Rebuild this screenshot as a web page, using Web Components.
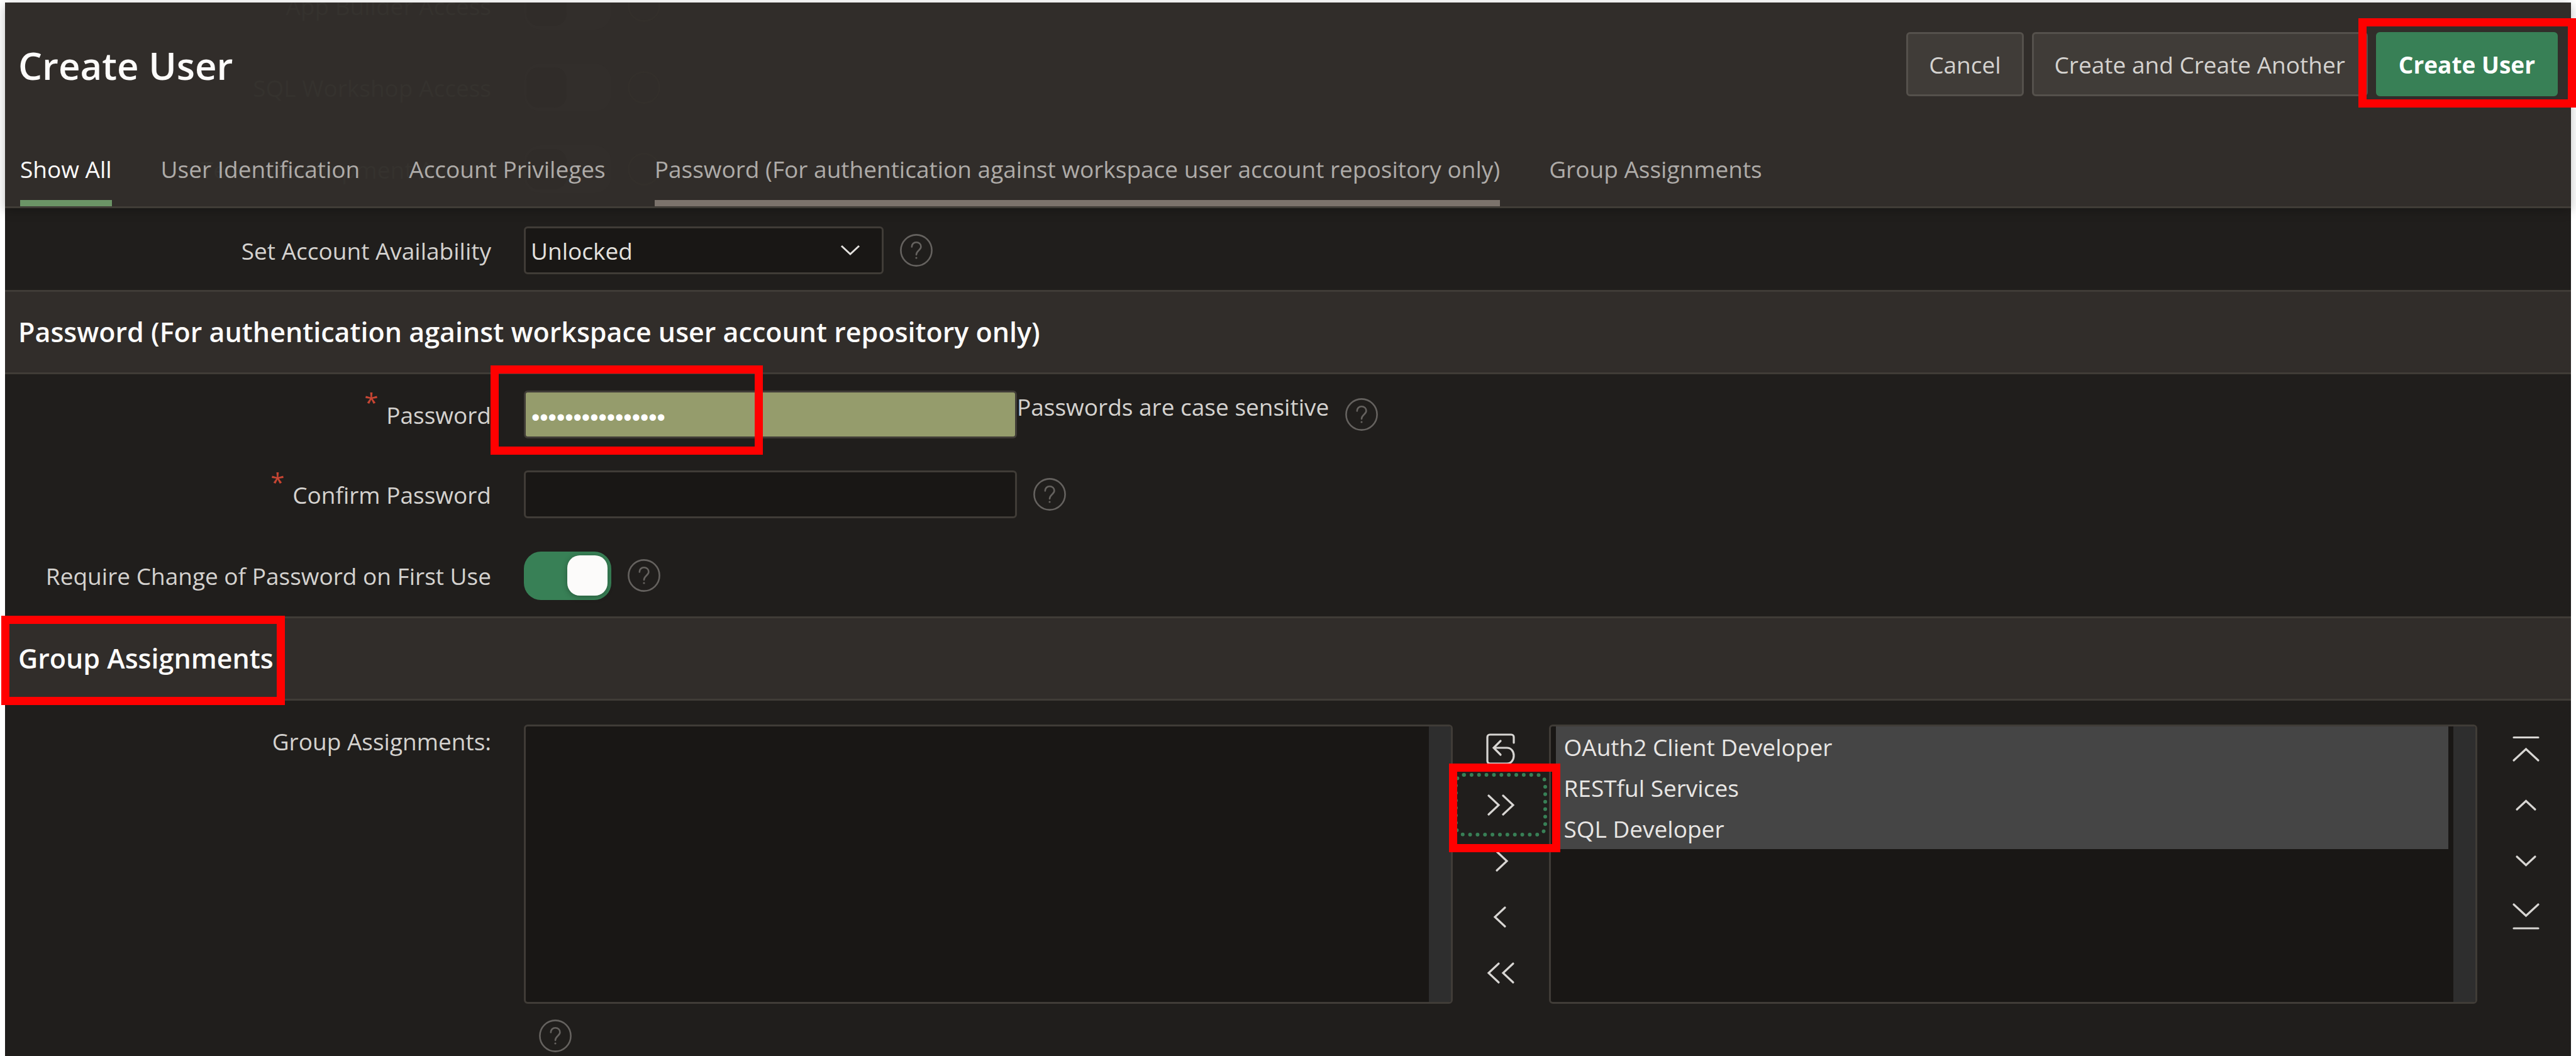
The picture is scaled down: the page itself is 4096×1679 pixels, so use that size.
<!DOCTYPE html>
<html lang="en">
<head>
<meta charset="utf-8">
<title>Create User</title>
<style>
  :root {
    --bar: #312d2a;
    --page: #201e1c;
    --well: #191715;
    --line: #403c37;
    --text: #d4d2cf;
    --bright: #fcfbfa;
    --accent: #388056;
    --size: 37px;
  }
  body {
    margin: 0;
    background: #fff;
    font-family: "Open Sans", "Noto Sans", sans-serif;
    font-size: var(--size);
    color: var(--text);
  }
</style>
</head>
<body>
<user-page></user-page>

<script>
const RESET = `*{box-sizing:border-box} button,input,select{font:inherit;color:inherit;margin:0}`;

class BaseElement extends HTMLElement {
  connectedCallback() {
    if (this.shadowRoot) return;
    const root = this.attachShadow({ mode: 'open' });
    root.innerHTML = `<style>${RESET}${this.styles()}</style>${this.markup()}`;
  }
  attr(name) { return this.getAttribute(name) || ''; }
  styles() { return ''; }
  markup() { return '<slot></slot>'; }
}

/* Red call-out frame laid over the element that contains it. */
class MarkFrame extends BaseElement {
  styles() {
    return `:host{display:block;position:absolute;z-index:5;border:13px solid #f00;pointer-events:none}`;
  }
  markup() { return ''; }
}

class HelpButton extends BaseElement {
  styles() {
    return `
      :host{display:block;flex:none;color:#65625f}
      button{display:block;width:52px;height:52px;padding:0;border:0;background:none}
      svg{display:block}`;
  }
  markup() {
    return `<button type="button" aria-label="Help"><svg width="52" height="52" viewBox="0 0 52 52" fill="none" stroke="currentColor" stroke-width="2.6" stroke-linecap="round">
      <circle cx="26" cy="26" r="24.6"/>
      <path d="M18.8 20.4c0-4.2 3-7.2 7.2-7.2s7.4 2.9 7.4 7c0 5.6-7.4 6-7.4 12.8"/>
      <circle cx="26" cy="38" r="1.6" fill="currentColor" stroke="none"/></svg></button>`;
  }
}

class ActionButton extends BaseElement {
  styles() {
    return `
      :host{display:block;position:relative}
      button{display:block;height:102px;padding:0 33px;border:3px solid #55514c;border-radius:6px;background:#403c38;white-space:nowrap}
      :host([primary]) button{background:var(--accent);border-color:var(--accent);color:#fff;font-weight:700}`;
  }
  markup() { return `<button type="button"><slot></slot></button><slot name="mark"></slot>`; }
}

class NavTabs extends BaseElement {
  styles() {
    return `
      :host{display:block}
      nav{display:flex;gap:78px}
      a{display:block;line-height:50px;padding-bottom:24px;border-bottom:10px solid transparent;color:#aeaba8;text-decoration:none;white-space:nowrap}
      a.current{color:var(--bright);border-color:#6b9466}
      a.near{border-color:#7c736c}`;
  }
  markup() {
    return `<nav>
      <a class="current" href="#all">Show All</a>
      <a href="#identification">User Identification</a>
      <a href="#privileges">Account Privileges</a>
      <a class="near" href="#password">Password (For authentication against workspace user account repository only)</a>
      <a href="#groups">Group Assignments</a></nav>`;
  }
}

/* Rows that have scrolled under the sticky header and show faintly through it. */
class ScrolledRows extends BaseElement {
  styles() {
    return `
      :host{position:absolute;inset:0;overflow:hidden;color:#35322e;z-index:0}
      .rows{display:grid;gap:54px;margin-top:-33px}
      .row{display:flex;align-items:center;height:76px}
      .name{width:773px;text-align:right;margin-right:52px}
      .track{display:flex;align-items:center;width:139px;height:76px;border-radius:26px;background:#322e2b;margin-right:26px;padding:0 4px}
      .knob{width:64px;height:64px;border-radius:20px;background:#302c29}
      .ring{width:52px;height:52px;border:3px solid #332f2b;border-radius:50%}`;
  }
  markup() {
    const row = t => `<div class="row"><span class="name">${t}</span><span class="track"><span class="knob"></span></span><span class="ring"></span></div>`;
    return `<div class="rows" aria-hidden="true">${['App Builder Access', 'SQL Workshop Access', 'Team Development Access'].map(row).join('')}</div>`;
  }
}

class PageHeader extends BaseElement {
  styles() {
    return `
      :host{display:block;position:relative;z-index:2;background:var(--bar);border-bottom:3px solid var(--line);box-shadow:0 4px 16px rgba(0,0,0,.25);padding:47px 21px 0 24px}
      .top{display:flex;justify-content:space-between;align-items:center;margin-bottom:91px;margin-left:-3px;position:relative}
      h1{margin:0;padding-top:4px;font-size:60px;line-height:70px;font-weight:600;color:var(--bright)}
      .actions{display:flex;gap:13px}
      nav-tabs{position:relative}
      mark-frame{inset:-22px -29px -18px -28px}`;
  }
  markup() {
    return `<scrolled-rows></scrolled-rows>
      <div class="top"><h1>Create User</h1>
        <div class="actions">
          <action-button>Cancel</action-button>
          <action-button>Create and Create Another</action-button>
          <action-button primary>Create User<mark-frame slot="mark"></mark-frame></action-button>
        </div></div>
      <nav-tabs></nav-tabs>`;
  }
}

class SectionTitle extends BaseElement {
  styles() {
    return `
      :host{display:flex;align-items:center;position:relative;height:134px;padding:0 21px;background:var(--bar);border:solid var(--line);border-width:3px 0;box-sizing:border-box}
      h2{margin:0;font-size:43px;line-height:60px;font-weight:600;color:var(--bright)}`;
  }
  markup() { return `<h2><slot></slot></h2><slot name="mark"></slot>`; }
}

const FIELD = `
  :host{display:flex;align-items:center;min-height:76px}
  .label{display:flex;justify-content:flex-end;align-items:center;flex:none;width:773px;min-height:76px;margin-right:52px;white-space:nowrap}
  .label i{align-self:flex-start;font-style:normal;font-size:40px;line-height:38px;color:#c74634;margin-right:13px}
  help-button{margin-left:26px}`;

class SelectField extends BaseElement {
  styles() {
    return FIELD + `
      .box{display:grid;width:572px;height:76px}
      select,svg{grid-area:1/1}
      select{appearance:none;padding:0 8px;border:3px solid var(--line);border-radius:6px;background:var(--well);color:#e3e1de}
      svg{justify-self:end;align-self:center;margin-right:37px;pointer-events:none}`;
  }
  markup() {
    return `<label class="label" for="f">${this.attr('label')}</label>
      <div class="box"><select id="f"><option>Unlocked</option><option>Locked</option></select>
      <svg width="32" height="20" viewBox="0 0 32 20" fill="none" stroke="#e3e1de" stroke-width="3"><path d="M2 3l14 13L30 3"/></svg></div>
      <help-button></help-button>`;
  }
}

class PasswordField extends BaseElement {
  styles() {
    return FIELD + `
      .box{position:relative;width:784px;height:76px}
      input{display:block;width:100%;height:76px;padding:10px 9px 0;border:3px solid var(--line);border-radius:6px;background:var(--well);color:#fff;font:38px "Liberation Sans",sans-serif;outline:0}
      :host([filled]) input{background:#959c6c}
      .note{align-self:flex-start;line-height:52px;white-space:nowrap}`;
  }
  markup() {
    const note = this.attr('note');
    return `<label class="label" for="f"><i>*</i>${this.attr('label')}</label>
      <div class="box"><input id="f" type="password" required value="${this.attr('value')}"><slot></slot></div>
      ${note ? `<span class="note">${note}</span>` : ''}<help-button></help-button>`;
  }
}

class SwitchField extends BaseElement {
  styles() {
    return FIELD + `
      :host{min-height:80px}
      input{appearance:none;display:flex;justify-content:flex-end;align-items:center;width:139px;height:77px;padding:0 6px;border-radius:27px;background:var(--accent)}
      input::before{content:"";width:64px;height:64px;border-radius:20px;background:var(--bright);box-shadow:0 2px 10px rgba(0,0,0,.3)}`;
  }
  markup() {
    return `<label class="label" for="f">${this.attr('label')}</label><input id="f" type="checkbox" role="switch" checked><help-button></help-button>`;
  }
}

const ICONS = {
  reset: ['Reset', '<path d="M45 16V7a4 4 0 0 0-4-4H7a4 4 0 0 0-4 4v38a4 4 0 0 0 4 4h27c7 0 11-6 11-12.5S41 24 34 24H13M24 13L13 24l11 11"/>'],
  allRight: ['Move All', '<path d="M5 11l16 15L5 41M28 11l16 15-16 15"/>'],
  right: ['Move', '<path d="M18 11l16 15-16 15"/>'],
  left: ['Remove', '<path d="M31 11L15 26l16 15"/>'],
  allLeft: ['Remove All', '<path d="M21 11L5 26l16 15M44 11L28 26l16 15"/>'],
  top: ['Top', '<path d="M5 7.5h39M5 44l19.5-18L44 44"/>'],
  up: ['Up', '<path d="M10 33l14.5-13.5L39 33"/>'],
  down: ['Down', '<path d="M10 19l14.5 13.500L39 19"/>'],
  bottom: ['Bottom', '<path d="M5 6l19.5 18L44 6M5 44h39"/>']
};

class IconColumn extends BaseElement {
  styles() {
    return `
      :host{display:flex;flex-direction:column;align-items:center;flex:none;margin-top:-6px;width:153px;color:#d8d6d3}
      button{position:relative;display:grid;place-items:center;width:136px;height:89px;padding:0;border:0;border-radius:10px;background:none}
      button.focused{outline:6px dotted var(--accent)}
      svg{display:block}
      mark-frame{inset:-21px -27px -31px -14px}`;
  }
  markup() {
    const focus = this.attr('focus');
    return this.attr('icons').split(' ').map(k => `<button type="button" aria-label="${ICONS[k][0]}"${k === focus ? ' class="focused"' : ''}>
      <svg width="49" height="52" viewBox="0 0 49 52" fill="none" stroke="currentColor" stroke-width="3.2" stroke-linecap="round">${ICONS[k][1]}</svg>${k === focus ? '<mark-frame></mark-frame>' : ''}</button>`).join('');
  }
}

class GroupList extends BaseElement {
  styles() {
    return `
      :host{display:flex;flex:1 1 0;min-width:0;height:444px;border:3px solid var(--line);border-radius:6px;background:var(--well);overflow:hidden;box-sizing:border-box}
      select{appearance:none;flex:1;min-width:0;padding:0 8px;border:0;background:none;outline:0;overflow:hidden}
      option{height:65px;padding:7px 13px;line-height:51px;color:#e8e6e4}
      option:checked{background:#454545 linear-gradient(#454545,#454545);color:#e8e6e4}
      .bar{flex:none;width:35px;background:#2e2e2e}`;
  }
  markup() {
    const items = this.attr('items').split('|').filter(Boolean);
    return `<select multiple size="6" aria-label="${this.attr('label')}">${items.map(t => `<option selected>${t}</option>`).join('')}</select><div class="bar"></div>`;
  }
}

class GroupShuttle extends BaseElement {
  styles() {
    return `
      :host{display:flex}
      .name{flex:none;width:773px;margin-right:52px;text-align:right;line-height:54px}
      .body{flex:1;min-width:0}
      .lists{display:flex}
      .sort{width:149px;padding-left:6px;box-sizing:border-box}
      help-button{margin:25px 0 0 24px}`;
  }
  markup() {
    return `<div class="name">Group Assignments:</div>
      <div class="body"><div class="lists">
        <group-list label="Available groups"></group-list>
        <icon-column icons="reset allRight right left allLeft" focus="allRight"></icon-column>
        <group-list label="Assigned groups" items="OAuth2 Client Developer|RESTful Services|SQL Developer"></group-list>
        <icon-column class="sort" icons="top up down bottom"></icon-column>
      </div><help-button></help-button></div>`;
  }
}

class UserPage extends BaseElement {
  styles() {
    return `
      :host{display:block;background:#fff;padding:4px 8px 0}
      main{display:block;background:var(--page);min-height:calc(100vh - 4px)}
      .fields{display:grid;gap:51px}
      .account{padding:29px 0 25px}
      .password{padding:26px 0 25px}
      .groups{padding:38px 0 0}
      .on-input{left:-53px;top:-40px;width:433px;height:142px;box-sizing:border-box}
      .on-title{left:-6px;top:-4px;width:451px;height:142px;box-sizing:border-box}`;
  }
  markup() {
    return `<main>
      <page-header></page-header>
      <div class="fields account"><select-field label="Set Account Availability"></select-field></div>
      <section-title>Password (For authentication against workspace user account repository only)</section-title>
      <div class="fields password">
        <password-field filled label="Password" value="Welcome-2-Oracle" note="Passwords are case sensitive"><mark-frame class="on-input"></mark-frame></password-field>
        <password-field label="Confirm Password"></password-field>
        <switch-field label="Require Change of Password on First Use"></switch-field>
      </div>
      <section-title>Group Assignments<mark-frame slot="mark" class="on-title"></mark-frame></section-title>
      <div class="groups"><group-shuttle></group-shuttle></div>
    </main>`;
  }
}

customElements.define('mark-frame', MarkFrame);
customElements.define('help-button', HelpButton);
customElements.define('action-button', ActionButton);
customElements.define('nav-tabs', NavTabs);
customElements.define('scrolled-rows', ScrolledRows);
customElements.define('page-header', PageHeader);
customElements.define('section-title', SectionTitle);
customElements.define('select-field', SelectField);
customElements.define('password-field', PasswordField);
customElements.define('switch-field', SwitchField);
customElements.define('icon-column', IconColumn);
customElements.define('group-list', GroupList);
customElements.define('group-shuttle', GroupShuttle);
customElements.define('user-page', UserPage);
</script>
</body>
</html>
